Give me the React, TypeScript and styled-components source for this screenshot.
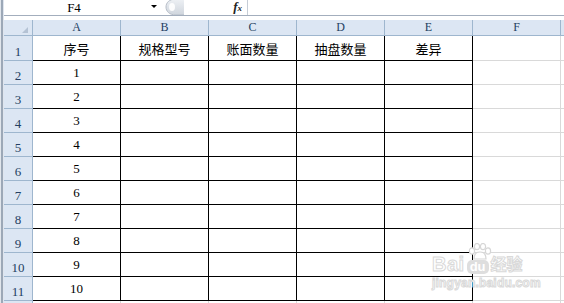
import React from "react";
import styled, { createGlobalStyle } from "styled-components";

const GlobalStyle = createGlobalStyle`
  html, body {
    margin: 0;
    padding: 0;
    background: #fff;
  }
  body {
    font-family: "Liberation Serif", "Noto Sans CJK SC", serif;
  }
`;

const HEAD_BG = "#dce6f3";
const HEAD_LINE = "#9eb6ce";
const HEAD_TEXT = "#243f62";
const GRID_LINE = "#d9d9d9";

const Screen = styled.div`
  position: relative;
  display: flex;
  width: 564px;
  height: 303px;
  overflow: hidden;
  background: #fff;
`;

const Gutter = styled.div`
  flex: none;
  width: 4px;
  background: linear-gradient(
    to right,
    #e1e6ec 0 1px,
    #9ca8b7 1px 3px,
    #dfe5ee 3px 4px
  );
`;

const Sheet = styled.div`
  flex: 1;
  display: flex;
  flex-direction: column;
  min-width: 0;
`;

const FormulaBar = styled.div`
  flex: none;
  display: flex;
  height: 15px;
  border-bottom: 1px solid #a3aebd;
`;

const NameBox = styled.div`
  flex: none;
  display: flex;
  width: 160px;
`;

const NameText = styled.div`
  width: 140px;
  text-align: center;
  font-size: 13px;
  line-height: 15px;
  color: #000;
`;

const DropArrow = styled.div`
  width: 20px;
  display: flex;
  align-items: center;
  justify-content: center;
  padding-bottom: 2px;

  &::after {
    content: "";
    border-left: 3px solid transparent;
    border-right: 3px solid transparent;
    border-top: 3px solid #000;
  }
`;

const Splitter = styled.div`
  flex: none;
  width: 20px;
  height: 15px;
`;

const FxBox = styled.div`
  flex: none;
  width: 58px;
  text-align: right;
  padding-right: 5px;
  border-right: 1px solid #c6cdd6;
  font-family: "Liberation Serif", serif;
  font-style: italic;
  font-weight: bold;
  font-size: 13px;
  line-height: 14px;
  color: #222;

  sub {
    font-size: 9px;
    vertical-align: baseline;
  }
`;

const Spacer = styled.div`
  flex: none;
  height: 4px;
`;

const Grid = styled.div`
  display: flex;
  flex-direction: column;
`;

const Row = styled.div<{ $h: number }>`
  display: flex;
  flex: none;
  height: ${(p) => p.$h}px;
`;

const Corner = styled.div`
  position: relative;
  flex: none;
  box-sizing: border-box;
  width: 29px;
  background: ${HEAD_BG};
  border-right: 1px solid ${HEAD_LINE};
  border-bottom: 1px solid ${HEAD_LINE};

  &::after {
    content: "";
    position: absolute;
    right: 4px;
    bottom: 2px;
    border-left: 6px solid transparent;
    border-bottom: 6px solid #b4c2d4;
  }
`;

const ColHead = styled.div<{ $w: number }>`
  flex: none;
  box-sizing: border-box;
  width: ${(p) => p.$w}px;
  background: ${HEAD_BG};
  border-right: 1px solid ${HEAD_LINE};
  border-bottom: 1px solid ${HEAD_LINE};
  text-align: center;
  font-size: 12px;
  line-height: 15px;
  color: ${HEAD_TEXT};
`;

const RowHead = styled.div`
  flex: none;
  box-sizing: border-box;
  width: 29px;
  display: flex;
  align-items: flex-end;
  justify-content: center;
  padding-bottom: 1px;
  background: ${HEAD_BG};
  border-right: 1px solid ${HEAD_LINE};
  border-bottom: 1px solid ${HEAD_LINE};
  font-size: 13px;
  line-height: 15px;
  color: ${HEAD_TEXT};
`;

const Cell = styled.div<{ $w: number; $boxed?: boolean }>`
  flex: none;
  box-sizing: border-box;
  width: ${(p) => p.$w}px;
  display: flex;
  align-items: center;
  justify-content: center;
  border-right: 1px solid ${(p) => (p.$boxed ? "#000" : GRID_LINE)};
  border-bottom: 1px solid ${(p) => (p.$boxed ? "#000" : GRID_LINE)};
  font-size: 13px;
  color: #000;
  white-space: nowrap;
`;

const Watermark = styled.div`
  position: absolute;
  left: 432px;
  top: 240px;
  width: 104px;
  pointer-events: none;
  font-family: "Liberation Sans", "Noto Sans CJK SC", sans-serif;
  font-weight: bold;
  color: #fff;
  -webkit-text-stroke: 1px #d9d9d9;
`;

const MarkLine = styled.div`
  display: flex;
  align-items: flex-end;
  height: 34px;
`;

const MarkBai = styled.span`
  font-size: 20px;
  line-height: 20px;
  letter-spacing: 0.5px;
`;

const MarkDu = styled.span`
  position: relative;
  display: inline-block;
  margin-left: 2px;
  padding: 0 3px;
  border-radius: 5px;
  background: #dedede;
  font-size: 13px;
  line-height: 14px;
  -webkit-text-stroke: 0;
  color: #fff;

  svg {
    position: absolute;
    left: 1px;
    bottom: 14px;
  }
`;

const MarkJy = styled.span`
  margin-left: 2px;
  font-size: 16px;
  line-height: 18px;
`;

const MarkUrl = styled.div`
  margin-top: 3px;
  font-size: 12px;
  line-height: 12px;
  letter-spacing: 0.2px;
`;

const COLS = ["A", "B", "C", "D", "E", "F"];
const HEADERS = ["序号", "规格型号", "账面数量", "抽盘数量", "差异"];
const W = 88;

function Paw() {
  return (
    <svg width="24" height="17" viewBox="0 0 24 17">
      <g fill="#fff" stroke="#d6d6d6" strokeWidth="1.2">
        <ellipse cx="4" cy="8" rx="2.6" ry="3.2" />
        <ellipse cx="9" cy="3.6" rx="2.6" ry="3.1" />
        <ellipse cx="15" cy="3.6" rx="2.6" ry="3.1" />
        <ellipse cx="20" cy="8" rx="2.6" ry="3.2" />
        <path d="M6 16 C6 11 9 9 12 9 C15 9 18 11 18 16 Z" />
      </g>
    </svg>
  );
}

function SplitKnob() {
  return (
    <svg width="20" height="15" viewBox="0 0 20 15">
      <defs>
        <linearGradient id="knob" x1="0" y1="0" x2="0" y2="1">
          <stop offset="0" stopColor="#eef1f5" />
          <stop offset="1" stopColor="#cfd5dd" />
        </linearGradient>
      </defs>
      <path
        d="M20 -1 L12 -1 C5 -1 2 3 2 7 C2 11 5 15 12 15 L20 15"
        fill="url(#knob)"
        stroke="#b7bec8"
      />
      <ellipse cx="8" cy="7" rx="3" ry="4" fill="#fff" opacity="0.9" />
    </svg>
  );
}

function App() {
  const body = Array.from({ length: 11 }, (_, i) => i);

  return (
    <Screen>
      <GlobalStyle />
      <Gutter />
      <Sheet>
        <FormulaBar>
          <NameBox>
            <NameText>F4</NameText>
            <DropArrow />
          </NameBox>
          <Splitter>
            <SplitKnob />
          </Splitter>
          <FxBox>
            f<sub>x</sub>
          </FxBox>
        </FormulaBar>
        <Spacer />
        <Grid>
          <Row $h={16}>
            <Corner />
            {COLS.map((c) => (
              <ColHead key={c} $w={W}>
                {c}
              </ColHead>
            ))}
            <ColHead $w={8} />
          </Row>
          {body.map((i) => (
            <Row key={i} $h={i === 0 ? 25 : 24}>
              <RowHead>{i + 1}</RowHead>
              {HEADERS.map((h, c) => (
                <Cell key={h} $w={W} $boxed>
                  {i === 0 ? h : c === 0 ? i : ""}
                </Cell>
              ))}
              <Cell $w={W} />
              <Cell $w={8} />
            </Row>
          ))}
          <Row $h={10}>
            <RowHead />
            {COLS.map((c) => (
              <Cell key={c} $w={W} />
            ))}
          </Row>
        </Grid>
      </Sheet>
      <Watermark>
        <MarkLine>
          <MarkBai>Bai</MarkBai>
          <MarkDu>
            <Paw />
            du
          </MarkDu>
          <MarkJy>经验</MarkJy>
        </MarkLine>
        <MarkUrl>jingyan.baidu.com</MarkUrl>
      </Watermark>
    </Screen>
  );
}

export default App;
